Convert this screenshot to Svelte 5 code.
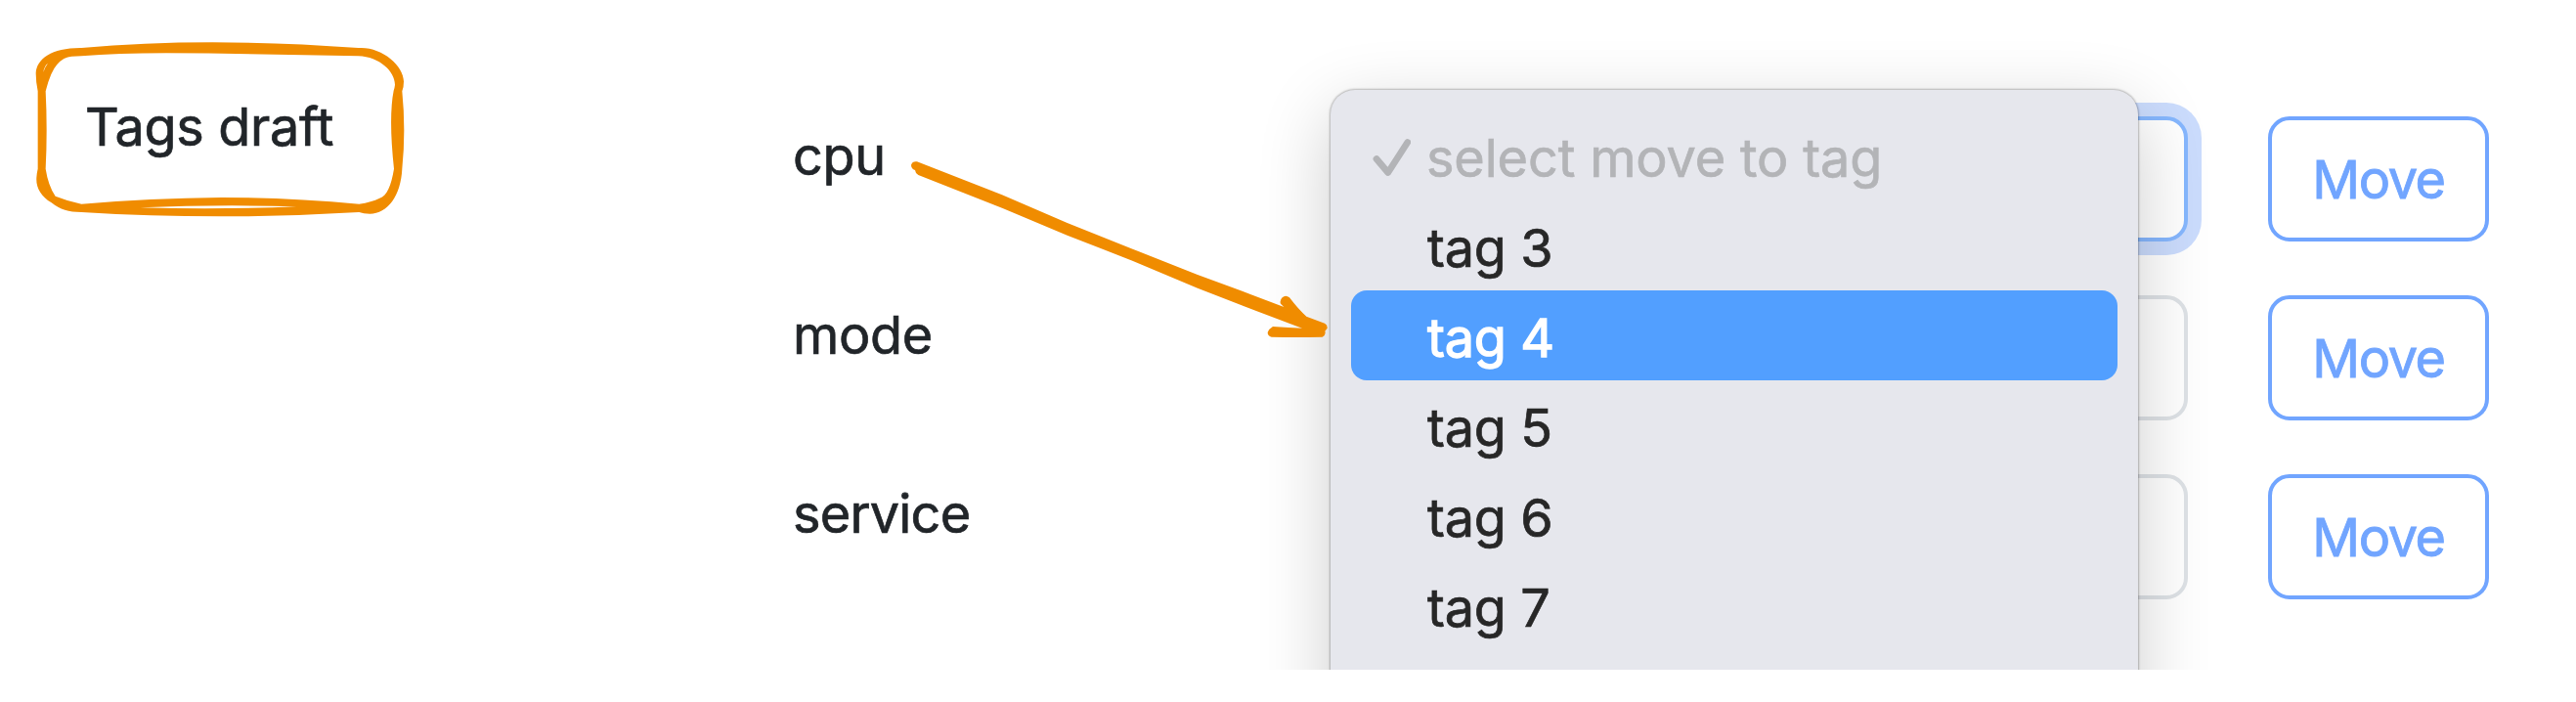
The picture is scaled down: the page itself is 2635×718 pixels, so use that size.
<script>
  const fields = [
    { name: 'cpu', focused: true },
    { name: 'mode', focused: false },
    { name: 'service', focused: false }
  ];
  const options = ['tag 3', 'tag 4', 'tag 5', 'tag 6', 'tag 7'];
  const active = 'tag 4';
</script>

<main class="page">
  <div class="content">
    <div class="group">
      <span class="title">Tags draft</span>
    </div>

    <div class="fields">
      {#each fields as field}
        <div class="field">
          <span class="name {field.name}">{field.name}</span>
          <div class="select" class:focused={field.focused}></div>
          <button class="move">Move</button>
        </div>
      {/each}
    </div>

    <div class="menu">
      <div class="option disabled">
        <svg class="check" viewBox="0 0 40 40" width="40" height="40">
          <path d="M5 21.500 L16.800 35.500 L36.800 4.500" />
        </svg>
        <span>select move to tag</span>
      </div>
      {#each options as option}
        <div class="option" class:active={option === active}>
          <span>{option}</span>
        </div>
      {/each}
    </div>
  </div>

  <svg class="frame" viewBox="0 0 1260 630" width="420" height="210">
    <path
      fill-rule="evenodd"
      d="M190 57 Q570 23 1040 57 C1110 52 1178 110 1179 160 Q1179 178 1174 190 Q1186 310 1174 428 C1170 510 1130 565 1075 566 Q1055 566 1042 561 Q615 587 190 561 C150 561 125 553 98 532 C65 512 50 485 52 455 Q53 440 56 428 L56 190 Q50 160 50 135 C52 90 100 56 190 57 Z
         M190 82 Q300 73 450 73 Q750 75 1040 82 C1105 84 1152 130 1152 170 Q1151 180 1148 188 Q1132 270 1149 428 C1140 480 1128 510 1105 518 Q1080 530 1042 536 Q830 516 620 516 Q400 518 190 536 Q150 528 110 512 Q88 480 80 428 Q86 310 80 190 Q95 130 115 108 Q135 84 160 83 Z
         M370 547 Q610 537 850 544 Q610 554 370 547 Z
         M73 131 Q76 112 87 104 Q79 114 73 131 Z"
    />
  </svg>

  <svg class="arrow" viewBox="0 0 1320 630" width="440" height="210">
    <path
      d="M39 46 L300 148 L500 234 L720 322 L900 393 L1060 452 L1165 492 L1155 482 Q1151 472 1160 463 Q1170 454 1182 463 Q1210 500 1234 521 L1290 542 Q1299 546 1298 557 L1291 566 Q1295 577 1283 584 Q1200 586 1127 584 Q1115 581 1115 570 Q1120 558 1131 552 Q1180 555 1221 557 L1080 504 L900 434 L700 350 L500 272 L300 188 L43 87 Q34 82 33 72 Q21 67 21 56 Q25 44 39 46 Z"
    />
  </svg>
</main>

<style>
  :global(body) {
    margin: 0;
    background: #fff;
  }

  .page {
    position: relative;
    width: 2635px;
    height: 718px;
    overflow: hidden;
    background: #fff;
    font-family: Inter, "Liberation Sans", sans-serif;
    font-size: 54px;
    color: #212529;
    -webkit-text-stroke: 0.7px currentColor;
  }

  .content {
    position: relative;
    display: flex;
    height: 685px;
    box-sizing: border-box;
    padding-left: 87px;
    overflow: hidden;
  }

  .group {
    width: 724px;
    padding-top: 90px;
    line-height: 80px;
    letter-spacing: -0.35px;
  }

  .fields {
    display: flex;
    flex-direction: column;
    gap: 55px;
    padding-top: 119px;
  }

  .field {
    display: grid;
    grid-template-columns: 600px 827px 226px;
    height: 128px;
  }

  .field .select {
    box-sizing: border-box;
    border: 4px solid #dee2e6;
    border-radius: 22px;
    background: #fff;
  }

  .field .select.focused {
    border-color: #86b7fe;
    box-shadow: 0 0 0 14px #cbdcfd;
  }

  .name {
    padding-top: 1px;
    line-height: 80px;
    letter-spacing: -0.3px;
  }

  .name.service {
    letter-spacing: -0.8px;
  }

  .move {
    box-sizing: border-box;
    width: 226px;
    margin-left: 82px;
    padding: 2px 0 0;
    border: 4px solid #71a5ff;
    border-radius: 22px;
    background: transparent;
    color: #71a5ff;
    font: inherit;
    letter-spacing: -1.4px;
    line-height: 1;
    text-align: center;
    -webkit-text-stroke: 0.9px currentColor;
  }

  .menu {
    position: absolute;
    left: 1361px;
    top: 92px;
    width: 826px;
    height: 800px;
    box-sizing: border-box;
    padding: 21px 21px 0;
    border-radius: 25px;
    background: #e6e7ed;
    color: #272727;
    box-shadow:
      0 0 2px 1px rgba(0, 0, 0, 0.25),
      0 22px 74px rgba(0, 0, 0, 0.2);
  }

  .option {
    display: flex;
    align-items: center;
    height: 92px;
    box-sizing: border-box;
    padding: 6px 0 0 78px;
    border-radius: 16px;
    letter-spacing: -0.3px;
    line-height: 86px;
  }

  .option.disabled {
    padding-left: 21px;
    gap: 16px;
    color: #b3b4b7;
    letter-spacing: -0.15px;
  }

  .option.active {
    background: #529fff;
    color: #fff;
    -webkit-text-stroke: 1.3px currentColor;
  }

  .check {
    margin-top: -3px;
    fill: none;
    stroke: #b3b4b7;
    stroke-width: 6.800;
    stroke-linecap: round;
    stroke-linejoin: round;
  }

  .frame,
  .arrow {
    position: absolute;
    fill: #f08c00;
  }

  .frame {
    left: 20px;
    top: 30px;
  }

  .arrow {
    left: 925px;
    top: 150px;
  }
</style>
